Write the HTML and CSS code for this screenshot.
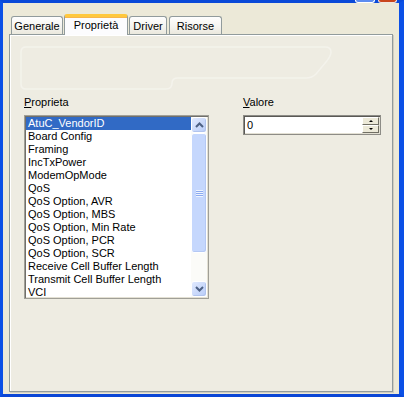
FILE: index.html
```html
<!DOCTYPE html>
<html lang="it">
<head>
  <meta charset="UTF-8">
  <title>Proprietà</title>
  <link rel="stylesheet" href="styles.css">
</head>
<body>
<div class="window">
  <!--pulsanti della barra del titolo (solo il bordo inferiore)-->
  <span class="cap cap-max"></span>
  <span class="cap cap-close"></span>

  <div class="tabs">
    <div class="tab tab-generale">Generale</div>
    <div class="tab tab-active">Proprietà</div>
    <div class="tab tab-driver">Driver</div>
    <div class="tab tab-risorse">Risorse</div>
  </div>

  <div class="panel">
    <svg class="ghost" width="320" height="46" viewBox="0 0 320 46">
      <path d="M6 1 H305 Q311 1 311 6 Q311 10 306 16 L296 28 Q292 32 286 32 H158 Q152 32 152 37 Q152 43 146 43 H6 Q1 43 1 38 V6 Q1 1 6 1 Z" fill="none" stroke="#f4f3ec" stroke-width="1.5"/>
    </svg>

    <div class="fields">
      <div class="field field-list">
        <div class="label"><u>P</u>roprieta</div>
        <div class="listbox">
          <ul class="items">
            <li class="selected">AtuC_VendorID</li>
            <li>Board Config</li>
            <li>Framing</li>
            <li>IncTxPower</li>
            <li>ModemOpMode</li>
            <li>QoS</li>
            <li>QoS Option, AVR</li>
            <li>QoS Option, MBS</li>
            <li>QoS Option, Min Rate</li>
            <li>QoS Option, PCR</li>
            <li>QoS Option, SCR</li>
            <li>Receive Cell Buffer Length</li>
            <li>Transmit Cell Buffer Length</li>
            <li>VCI</li>
          </ul>
          <div class="scrollbar">
            <div class="sb-btn">
              <svg width="9" height="6" viewBox="0 0 9 6"><path d="M1 5 L4.5 1.5 L8 5" fill="none" stroke="#4d6185" stroke-width="2"/></svg>
            </div>
            <div class="sb-thumb"><span class="grip"></span></div>
            <div class="sb-track"></div>
            <div class="sb-btn">
              <svg width="9" height="6" viewBox="0 0 9 6"><path d="M1 1 L4.5 4.5 L8 1" fill="none" stroke="#4d6185" stroke-width="2"/></svg>
            </div>
          </div>
        </div>
      </div>

      <div class="field field-value">
        <div class="label"><u>V</u>alore</div>
        <div class="spin">
          <span class="spin-text">0</span>
          <div class="spin-btns">
            <span class="spin-btn"><i class="tri-up"></i></span>
            <span class="spin-btn"><i class="tri-down"></i></span>
          </div>
        </div>
      </div>
    </div>
  </div>
</div>
</body>
</html>
```

FILE: styles.css
```css
* {
  padding: 0;
  margin: 0;
  list-style: none;
  box-sizing: border-box;
}

body {
  width: 404px;
  height: 397px;
  overflow: hidden;
  font-family: "Liberation Sans", Arial, sans-serif;
  font-size: 11px;
  color: #000;
}

.window {
  position: relative;
  width: 404px;
  height: 397px;
  background: #ece9d8;
  border-top: 3px solid #0a49d8;
  border-left: 3px solid #0b50e6;
  border-right: 5px solid #0b50e6;
  border-bottom: 3px solid #0a46d6;
  padding: 11px 0 0 6px;
}

/* bordo inferiore dei pulsanti del titolo */
.cap {
  position: absolute;
  top: -3px;
  height: 3px;
  border-radius: 0 0 3px 3px;
}

.cap-max {
  left: 352px;
  width: 20px;
  background: #5c8cf0;
  border: 1px solid #fff;
  border-top: 0;
}

.cap-close {
  left: 375px;
  width: 19px;
  background: #c8451c;
  border: 1px solid #f1e5e0;
  border-top: 0;
}

/* linguette */
.tabs {
  display: flex;
  align-items: flex-end;
  height: 20px;
  position: relative;
  z-index: 1;
}

.tab {
  height: 18px;
  line-height: 18px;
  text-align: center;
  border: 1px solid #919b9c;
  border-bottom: 0;
  border-radius: 3px 3px 0 0;
  background: linear-gradient(#fefefe, #f4f3ee 60%, #eae8dd);
}

.tab-generale {
  width: 52px;
  margin-left: 2px;
}

.tab-active {
  width: 64px;
  height: 21px;
  margin-left: 1px;
  margin-bottom: -1px;
  line-height: 17px;
  background: #fcfcfe;
  border-top: 3px solid #ffc83c;
  box-shadow: inset 0 1px 0 #f7b54a;
  border-left-color: #919b9c;
}

.tab-driver {
  width: 38px;
  margin-left: 1px;
}

.tab-risorse {
  width: 53px;
  margin-left: 2px;
}

/* pannello */
.panel {
  width: 384px;
  height: 358px;
  background: #eeece2;
  border: 1px solid #919b9c;
  box-shadow: inset 1px 1px 0 #fff, 1px 1px 0 #d0cdc0;
  padding: 11px 14px 0 14px;
}

.ghost {
  display: block;
  margin-left: -4px;
}

.fields {
  display: flex;
  gap: 34px;
  margin-top: 4px;
}

.label {
  height: 13px;
  line-height: 13px;
  margin-bottom: 6px;
}

.label u {
  text-decoration: underline;
}

/* lista proprietà */
.listbox {
  display: flex;
  width: 185px;
  height: 184px;
  border: 1px solid #a09f97;
  box-shadow: inset 1px 1px 0 #71706b, inset -1px -1px 0 #e3e0d3;
  padding: 1px;
  background: #fff;
  overflow: hidden;
}

.items {
  flex: 1;
  overflow: hidden;
}

.items li {
  height: 13px;
  line-height: 13px;
  padding-left: 2px;
  white-space: nowrap;
}

.items li.selected {
  background: #316ac5;
  color: #fff;
}

.scrollbar {
  width: 16px;
  display: flex;
  flex-direction: column;
  background: #fbfbf8;
}

.sb-btn {
  height: 16px;
  display: flex;
  align-items: center;
  justify-content: center;
  background: linear-gradient(135deg, #e0e9fe, #b8ccf8);
  border: 1px solid #fff;
  border-radius: 3px;
  box-shadow: inset -1px -1px 0 #b1c4ee;
}

.sb-thumb {
  height: 120px;
  display: flex;
  align-items: center;
  justify-content: center;
  background: #c5d7fd;
  border: 1px solid #fff;
  border-radius: 3px;
  box-shadow: inset -1px -1px 0 #b4c8f4;
}

.grip {
  width: 7px;
  height: 7px;
  background: repeating-linear-gradient(#eef4fe 0 1px, #8caaf0 1px 2px);
}

.sb-track {
  flex: 1;
}

/* campo valore */
.spin {
  display: flex;
  width: 138px;
  height: 20px;
  background: #fff;
  border: 1px solid #8d8c86;
  box-shadow: inset 1px 1px 0 #5a5955, inset -1px -1px 0 #e3e0d3;
  padding: 1px;
}

.spin-text {
  flex: 1;
  line-height: 16px;
  padding-left: 2px;
}

.spin-btns {
  width: 17px;
  display: flex;
  flex-direction: column;
}

.spin-btn {
  flex: 1;
  display: flex;
  align-items: center;
  justify-content: center;
  background: #ece9d8;
  border: 1px solid;
  border-color: #fff #716f64 #716f64 #fff;
}

.tri-up,
.tri-down {
  width: 0;
  height: 0;
  border-left: 2px solid transparent;
  border-right: 2px solid transparent;
}

.tri-up {
  border-bottom: 2px solid #000;
}

.tri-down {
  border-top: 2px solid #000;
}
```
